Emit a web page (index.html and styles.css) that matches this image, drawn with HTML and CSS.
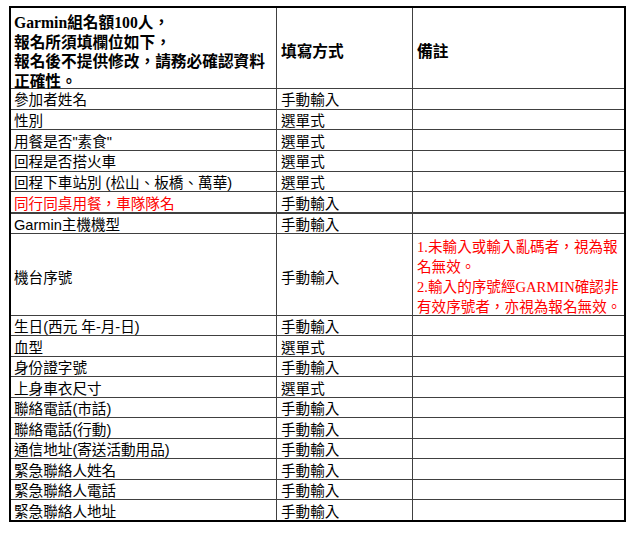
FILE: index.html
```html
<!DOCTYPE html>
<html lang="zh-Hant">
<head>
<meta charset="utf-8">
<title>Garmin 報名欄位</title>
<link rel="stylesheet" href="styles.css">
</head>
<body>
<div class="sheet">
  <div class="c h head-main">Garmin組名額100人，<br>報名所須填欄位如下，<br>報名後不提供修改，請務必確認資料<br>正確性。</div>
  <div class="c h mid">填寫方式</div>
  <div class="c h mid">備註</div>

  <div class="c">參加者姓名</div><div class="c">手動輸入</div><div class="c"></div>
  <div class="c">性別</div><div class="c">選單式</div><div class="c"></div>
  <div class="c">用餐是否"素食"</div><div class="c">選單式</div><div class="c"></div>
  <div class="c">回程是否搭火車</div><div class="c">選單式</div><div class="c"></div>
  <div class="c">回程下車站別 (松山、板橋、萬華)</div><div class="c">選單式</div><div class="c"></div>
  <div class="c red">同行同桌用餐，車隊隊名</div><div class="c">手動輸入</div><div class="c"></div>

  <div class="c thick">Garmin主機機型</div><div class="c thick">手動輸入</div><div class="c thick"></div>

  <div class="c mid">機台序號</div>
  <div class="c mid">手動輸入</div>
  <div class="c note">1.未輸入或輸入亂碼者，視為報<br>名無效。<br>2.輸入的序號經GARMIN確認非<br>有效序號者，亦視為報名無效。</div>

  <div class="c">生日(西元 年-月-日)</div><div class="c">手動輸入</div><div class="c"></div>
  <div class="c">血型</div><div class="c">選單式</div><div class="c"></div>
  <div class="c">身份證字號</div><div class="c">手動輸入</div><div class="c"></div>
  <div class="c">上身車衣尺寸</div><div class="c">選單式</div><div class="c"></div>
  <div class="c">聯絡電話(市話)</div><div class="c">手動輸入</div><div class="c"></div>
  <div class="c">聯絡電話(行動)</div><div class="c">手動輸入</div><div class="c"></div>
  <div class="c">通信地址(寄送活動用品)</div><div class="c">手動輸入</div><div class="c"></div>
  <div class="c">緊急聯絡人姓名</div><div class="c">手動輸入</div><div class="c"></div>
  <div class="c">緊急聯絡人電話</div><div class="c">手動輸入</div><div class="c"></div>
  <div class="c">緊急聯絡人地址</div><div class="c">手動輸入</div><div class="c"></div>
</div>
</body>
</html>
```

FILE: styles.css
```css
html, body {
  margin: 0;
  padding: 0;
  background: #ffffff;
}

body {
  font-family: "Liberation Sans", "Noto Sans CJK TC", sans-serif;
  font-size: 14.6px;
  color: #000;
}

.sheet {
  margin: 6px 0 0 9px;
  width: 613px;
  border: 2px solid #000;
  background: #404040;
  display: grid;
  grid-template-columns: 265px 135px 211px;
  grid-template-rows: 80px repeat(6, 19.67px) 20.5px 80.5px repeat(10, 19.5px);
  gap: 1px;
}

.c {
  background: #fff;
  padding: 3px 0 0 3px;
  line-height: 18px;
  white-space: nowrap;
  display: flex;
  align-items: center;
  overflow: visible;
}

.c:nth-child(3n+2),
.c:nth-child(3n) {
  padding-left: 4px;
}

.h {
  font-family: "Liberation Serif", "Noto Sans CJK TC", serif;
  font-weight: bold;
  font-size: 15.7px;
}

.head-main {
  display: block;
  line-height: 19.5px;
  padding-top: 5px;
}

.mid {
  padding-top: 7px;
}

.red {
  color: #ff0000;
}

.thick {
  margin-top: 1px;
  background: #fff;
}

.note {
  display: block;
  color: #ff0000;
  font-family: "Liberation Serif", "Noto Sans CJK TC", serif;
  line-height: 20px;
  padding-top: 3px;
  padding-left: 3px;
}
```
